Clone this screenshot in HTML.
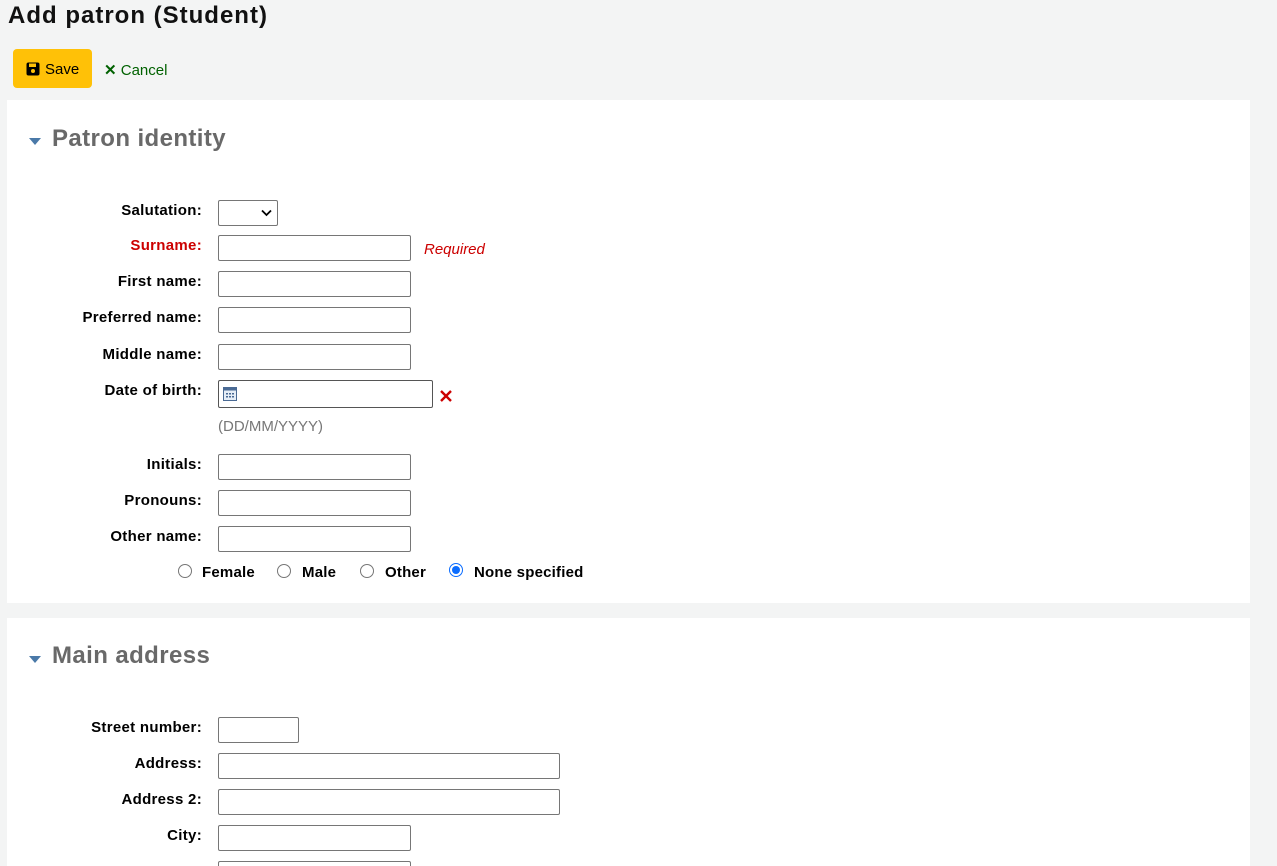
<!DOCTYPE html><html style="overflow:hidden;height:866px"><head><style>
body{margin:0;width:1277px;height:866px;background:#f3f4f4;font-family:"Liberation Sans",sans-serif;position:relative;overflow:hidden;color:#000}
.a{position:absolute}
h1{position:absolute;left:8px;top:2px;margin:0;font-size:24px;letter-spacing:1px;font-weight:bold;color:#111}
.panel{position:absolute;left:7px;width:1243px;background:#fff}
.sec{position:absolute;left:52px;font-size:24px;letter-spacing:0.4px;font-weight:bold;color:#696969}
.tri{position:absolute;left:29px;width:0;height:0;border-left:6px solid transparent;border-right:6px solid transparent;border-top:7px solid #4a79a8}
.lbl{position:absolute;right:1075px;font-size:15px;letter-spacing:0.3px;font-weight:bold;white-space:nowrap}
.in{position:absolute;left:218px;height:24px;border:1px solid #767676;border-radius:2px;background:#fff;width:191px}
.rad{position:absolute;width:12px;height:12px;border:1px solid #767676;border-radius:50%;background:#fff}
.rt{position:absolute;font-size:15px;letter-spacing:0.2px;font-weight:bold}
</style></head><body>
<h1>Add patron (Student)</h1>
<div class="a" style="left:13px;top:49px;width:79px;height:39px;background:#ffc107;border-radius:4px"></div>
<svg class="a" style="left:26px;top:62px" width="14" height="14" viewBox="0 0 14 14"><rect x="0.5" y="0.5" width="13" height="13" rx="2" fill="#000"/><rect x="3" y="1.5" width="7" height="3.5" fill="#ffc107"/><circle cx="7" cy="9" r="2" fill="#ffc107"/></svg>
<div class="a" style="left:45px;top:61px;font-size:15px">Save</div>
<div class="a" style="left:104px;top:61px;font-size:15px;color:#006100"><b>✕</b> Cancel</div>

<div class="panel" style="top:100px;height:503px"></div>
<div class="tri" style="top:138px"></div>
<div class="sec" style="top:125px">Patron identity</div>

<div class="lbl" style="top:202px">Salutation:</div>
<div class="in" style="top:200px;width:58px"></div>
<svg class="a" style="left:261px;top:209px" width="11" height="8"><path d="M1 1.5L5.5 6L10 1.5" stroke="#000" stroke-width="1.8" fill="none"/></svg>
<div class="lbl" style="top:237px;color:#c00">Surname:</div>
<div class="in" style="top:235px"></div>
<div class="a" style="left:424px;top:241px;font-size:15px;font-style:italic;color:#c00">Required</div>
<div class="lbl" style="top:273px">First name:</div><div class="in" style="top:271px"></div>
<div class="lbl" style="top:309px">Preferred name:</div><div class="in" style="top:307px"></div>
<div class="lbl" style="top:346px">Middle name:</div><div class="in" style="top:344px"></div>
<div class="lbl" style="top:382px">Date of birth:</div>
<div class="in" style="top:380px;width:213px;height:26px;border-color:#555"></div>
<svg class="a" style="left:223px;top:387px" width="14" height="14"><rect x="0.5" y="0.5" width="13" height="13" fill="#e6eef7" stroke="#4a6a94"/><rect x="0.5" y="0.5" width="13" height="3" fill="#4a6a94"/><g fill="#4a6a94"><rect x="3" y="6" width="2" height="1.5"/><rect x="6" y="6" width="2" height="1.5"/><rect x="9" y="6" width="2" height="1.5"/><rect x="3" y="9" width="2" height="1.5"/><rect x="6" y="9" width="2" height="1.5"/><rect x="9" y="9" width="2" height="1.5"/></g></svg>
<svg class="a" style="left:439px;top:389px" width="14" height="14"><path d="M2 2L12 12M12 2L2 12" stroke="#c00" stroke-width="2.4"/></svg>
<div class="a" style="left:218px;top:418px;font-size:15px;color:#777">(DD/MM/YYYY)</div>
<div class="lbl" style="top:456px">Initials:</div><div class="in" style="top:454px"></div>
<div class="lbl" style="top:492px">Pronouns:</div><div class="in" style="top:490px"></div>
<div class="lbl" style="top:528px">Other name:</div><div class="in" style="top:526px"></div>
<div class="rad" style="left:178px;top:564px"></div><div class="rt" style="left:202px;top:564px">Female</div>
<div class="rad" style="left:277px;top:564px"></div><div class="rt" style="left:302px;top:564px">Male</div>
<div class="rad" style="left:360px;top:564px"></div><div class="rt" style="left:385px;top:564px">Other</div>
<div class="rad" style="left:449px;top:563px;border:1px solid #0a6cff;width:12px;height:12px"><div style="margin:2px;width:8px;height:8px;border-radius:50%;background:#0a6cff"></div></div><div class="rt" style="left:474px;top:564px">None specified</div>

<div class="panel" style="top:618px;height:248px"></div>
<div class="tri" style="top:656px"></div>
<div class="sec" style="top:642px">Main address</div>
<div class="lbl" style="top:719px">Street number:</div><div class="in" style="top:717px;width:79px"></div>
<div class="lbl" style="top:755px">Address:</div><div class="in" style="top:753px;width:340px"></div>
<div class="lbl" style="top:791px">Address 2:</div><div class="in" style="top:789px;width:340px"></div>
<div class="lbl" style="top:827px">City:</div><div class="in" style="top:825px"></div>
<div class="in" style="top:861px"></div>
</body></html>
